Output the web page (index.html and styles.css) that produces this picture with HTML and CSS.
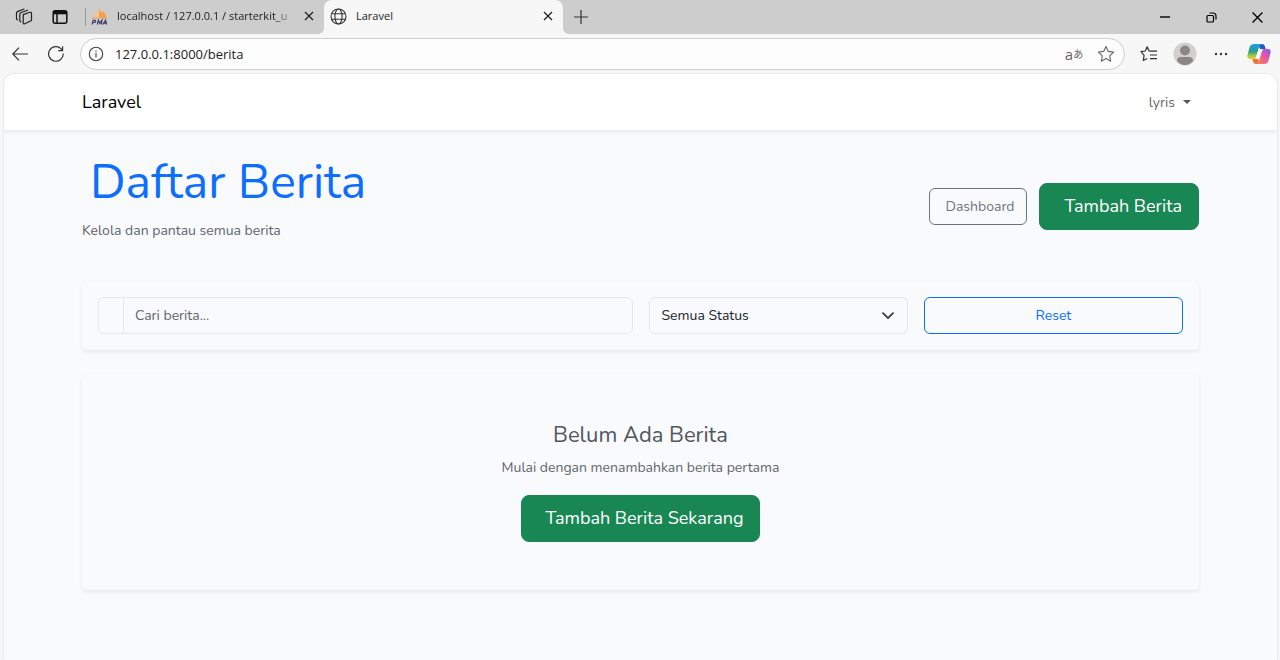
FILE: index.html
```html
<!DOCTYPE html>
<html lang="id">
<head>
<meta charset="utf-8">
<title>Laravel</title>
<link rel="stylesheet" href="styles.css">
</head>
<body>
<header class="browser">
  <div class="tab-strip">
    <button class="strip-btn" aria-label="Workspaces">
      <svg width="18" height="18" viewBox="0 0 18 18" fill="none" stroke="#222" stroke-width="1.2" stroke-linejoin="round" stroke-linecap="round"><path d="M8.200 6.600 15 4.300q1.500-.3 1.500 1.200v6.200q0 1-1 1.300l-5.700 2.800q-1.600.5-1.600-1.100V7.500q0-.7.500-.9z"/><path d="M5.800 13.800q-1-.2-1-1.200V6.200q0-1 1-1.400l6.700-2.600M2.500 11.800q-1-.2-1-1.200V5q0-1 1-1.400L9 1"/></svg>
    </button>
    <button class="strip-btn" aria-label="Tab actions">
      <svg width="16" height="16" viewBox="0 0 16 16" fill="none" stroke="#111" stroke-width="1.5"><rect x="1.200" y="1.700" width="13.600" height="12.600" rx="2"/><path d="M1.500 3.600h13" stroke-width="3.400"/><path d="M5 5v9"/></svg>
    </button>
    <div class="tab">
      <svg width="17" height="17" viewBox="0 0 17 17"><path d="M7 2.500 1.500 9.500H7z" fill="#f9c48a"/><path d="M8 .5v9.200h7.500Q13.500 4 11.500 2.500l-.5 3z" fill="#f7a13e"/><path d="M1 10.300q7-1.500 15 .2" stroke="#e0a060" fill="none"/><path d="M1.200 16.500 2.200 12.300h1.800q1.400 1.200-.2 2.200H2M6.300 16.500l1.100-4.200 1.300 3 2.200-3-.5 4.200M11.800 16.500l2.800-4.200.9 4.200M12.800 15.200h2.400" fill="none" stroke="#3c3c66" stroke-width="1.200"/></svg>
      <span class="tab-title fade">localhost / 127.0.0.1 / starterkit_u</span>
      <button class="close" aria-label="Close tab"><svg width="10" height="10" viewBox="0 0 10 10" stroke="#222" stroke-width="1.300"><path d="m1 1 8 8M9 1 1 9"/></svg></button>
    </div>
    <div class="tab active">
      <svg width="17" height="17" viewBox="0 0 17 17" fill="none" stroke="#333" stroke-width="1.100"><circle cx="8.500" cy="8.500" r="7.500"/><ellipse cx="8.500" cy="8.500" rx="3.600" ry="7.500"/><path d="M1.800 5.800h13.400M1.800 11.200h13.400"/></svg>
      <span class="tab-title">Laravel</span>
      <button class="close" aria-label="Close tab"><svg width="10" height="10" viewBox="0 0 10 10" stroke="#222" stroke-width="1.300"><path d="m1 1 8 8M9 1 1 9"/></svg></button>
    </div>
    <button class="new-tab" aria-label="New tab"><svg width="14" height="14" viewBox="0 0 14 14" stroke="#333" stroke-width="1.200"><path d="M0 7h14M7 0v14"/></svg></button>
    <div class="window-controls">
      <button aria-label="Minimize"><svg width="10" height="10" viewBox="0 0 10 10" stroke="#000" stroke-width="1.400"><path d="M0 5h10"/></svg></button>
      <button aria-label="Restore"><svg width="11" height="11" viewBox="0 0 11 11" fill="none" stroke="#000" stroke-width="1.200"><rect x="1" y="3.500" width="6.500" height="6.500" rx="1"/><path d="M3.500 1H7q3 0 3 3v3.500"/></svg></button>
      <button aria-label="Close"><svg width="11" height="11" viewBox="0 0 10 10" stroke="#000" stroke-width="1.200"><path d="m.5.5 9 9M9.500.5l-9 9"/></svg></button>
    </div>
  </div>
  <div class="toolbar">
    <button aria-label="Back"><svg width="16" height="14" viewBox="0 0 16 14" fill="none" stroke="#333" stroke-width="1.200"><path d="M7 .7.800 7 7 13.300M.800 7H16"/></svg></button>
    <button aria-label="Refresh"><svg width="16" height="16" viewBox="0 0 16 16" fill="none" stroke="#333" stroke-width="1.200"><path d="M15.200 7.500a7.300 7.300 0 1 1-2-4.600l1.300 1.500M14.600.3v4.300h-4.400"/></svg></button>
    <div class="address">
      <svg width="16" height="16" viewBox="0 0 16 16" fill="none" stroke="#444" stroke-width="1.100"><circle cx="8" cy="8" r="6.700"/><path d="M8 7v4.500M8 4.500v1.300"/></svg>
      <input class="url" type="text" aria-label="Address" value="127.0.0.1:8000/berita">
      <button class="translate" aria-label="Translate">a<span>あ</span></button>
      <button aria-label="Add favorite"><svg width="18" height="18" viewBox="0 0 18 18" fill="none" stroke="#666" stroke-width="1.100" stroke-linejoin="round"><path d="m9 1.500 2.300 4.900 5.300.7-3.900 3.700 1 5.400L9 13.600l-4.700 2.600 1-5.400L1.400 7.100l5.300-.7z"/></svg></button>
    </div>
    <button aria-label="Favorites"><svg width="18" height="18" viewBox="0 0 18 18" fill="none" stroke="#333" stroke-width="1.200" stroke-linejoin="round"><path d="M11.200 6 9 5.900 7.200 1.800 5.300 6 1 6.700l3.100 3.600-.8 5.200L7.200 13.500M10 6.200h7M10 10h7M10 13.700h7"/></svg></button>
    <button aria-label="Profile"><svg width="24" height="24" viewBox="0 0 24 24"><circle cx="12" cy="12" r="11.500" fill="#d2d0ce"/><circle cx="12" cy="8.500" r="5" fill="#8a8886"/><path d="M4 19q0-4 4-4h8q4 0 4 4-3.500 4-8 4t-8-4z" fill="#8a8886"/></svg></button>
    <button aria-label="Settings and more"><svg width="14" height="4" viewBox="0 0 14 4" fill="#333"><circle cx="2" cy="2" r="1.200"/><circle cx="7" cy="2" r="1.200"/><circle cx="12" cy="2" r="1.200"/></svg></button>
    <button class="copilot" aria-label="Copilot">
      <svg width="24" height="22" viewBox="0 0 24 22"><defs><linearGradient id="leaf-left" x1="0" y1="0" x2="0" y2="1"><stop offset="0" stop-color="#1a9fe8"/><stop offset=".5" stop-color="#2d9d8c"/><stop offset=".8" stop-color="#a8cc3c"/><stop offset="1" stop-color="#f0d020"/></linearGradient><linearGradient id="leaf-right" x1="1" y1="0" x2="0" y2="1"><stop offset="0" stop-color="#8a55f0"/><stop offset=".5" stop-color="#ec5a9c"/><stop offset="1" stop-color="#ff8c3d"/></linearGradient></defs><path d="M7 1h8q-2 .3-2.600 2L9 14q-.7 2-2.500 2H3q-3.200 0-2.500-4l2-7.500Q3.500 1 7 1z" fill="url(#leaf-left)"/><path d="M17 21H9q2-.3 2.600-2L15 8q.7-2 2.500-2H21q3.200 0 2.500 4l-2 7.500Q20.500 21 17 21z" fill="url(#leaf-right)"/><path d="M12 3.500Q12.700 1 15 1q2.200 0 2.800 2l.9 3h-1.500Q15 6 14 8.500z" fill="#2456cc"/><path d="M12 18.500Q11.300 21 9 21q-2.200 0-2.800-2l-.9-3h1.500Q9 16 10 13.500z" fill="#f2703e"/><path d="M12 5.500 9.300 14q-.5 1.600-1.500 2h2.700l1.500-.8L14.700 8q.5-1.600 1.500-2h-3z" fill="#fff"/></svg>
    </button>
  </div>
</header>
<div class="page">
  <nav class="navbar">
    <div class="container nav-row">
      <a class="brand" href="#">Laravel</a>
      <a class="user" href="#">lyris<span class="caret"></span></a>
    </div>
  </nav>
  <main class="container">
    <div class="page-head">
      <div>
        <h1>Daftar Berita</h1>
        <p>Kelola dan pantau semua berita</p>
      </div>
      <div class="actions">
        <a class="btn btn-gray" href="#">Dashboard</a>
        <a class="btn btn-green" href="#">Tambah Berita</a>
      </div>
    </div>
    <form class="card filters">
      <div class="search">
        <span class="addon"></span>
        <input type="text" placeholder="Cari berita..." aria-label="Cari berita">
      </div>
      <div class="status">
        <select aria-label="Status"><option>Semua Status</option></select>
        <svg width="12" height="8" viewBox="0 0 12 8" fill="none" stroke="#343a40" stroke-width="1.700" stroke-linecap="round" stroke-linejoin="round"><path d="m1 1.200 5 5 5-5"/></svg>
      </div>
      <button class="btn btn-blue" type="reset">Reset</button>
    </form>
    <section class="card empty">
      <h2>Belum Ada Berita</h2>
      <p>Mulai dengan menambahkan berita pertama</p>
      <a class="btn btn-green" href="#">Tambah Berita Sekarang</a>
    </section>
  </main>
</div>
</body>
</html>
```
FILE: styles.css
```css
* { box-sizing: border-box; }
body {
  margin: 0;
  min-height: 100vh;
  display: flex;
  flex-direction: column;
  background: #f7f7f7;
  color: #212529;
  font: 14px/23px Nunito, Lato, sans-serif;
}
h1, h2, p { margin: 0; font-weight: 400; }
a { text-decoration: none; color: inherit; }
button, input, select { font: inherit; color: inherit; }
svg { display: block; flex: none; }

.browser { font: 11px/16px "Segoe UI", "Open Sans", sans-serif; color: #222; }
.browser button {
  display: flex;
  align-items: center;
  justify-content: center;
  flex: none;
  border: 0;
  padding: 0;
  background: none;
}
.tab-strip { display: flex; height: 34px; background: #cdcdcd; }
.strip-btn { width: 36px; }
.tab-strip .strip-btn:first-child { margin-left: 6px; }
.tab {
  display: flex;
  align-items: center;
  gap: 9px;
  width: 239px;
  padding: 0 10px 2px 6px;
}
.tab:not(.active) {
  margin-left: 7px;
  background: linear-gradient(#999, #999) 0 8px / 1px 18px no-repeat;
}
.tab.active { position: relative; background: #f7f7f7; border-radius: 8px 8px 0 0; }
.tab.active::before,
.tab.active::after {
  content: "";
  position: absolute;
  bottom: 0;
  width: 6px;
  height: 6px;
}
.tab.active::before { right: 100%; background: radial-gradient(circle at 0 0, transparent 6px, #f7f7f7 6px); }
.tab.active::after { left: 100%; background: radial-gradient(circle at 100% 0, transparent 6px, #f7f7f7 6px); }
.tab-title { flex: 1; white-space: nowrap; }
.fade { mask-image: linear-gradient(to right, #000 88%, transparent); }
.new-tab { width: 36px; padding-bottom: 2px; }
.window-controls { display: flex; margin-left: auto; }
.window-controls button { width: 46px; }

.toolbar { display: flex; align-items: center; height: 40px; padding-right: 2px; }
.toolbar > button { width: 36px; }
.toolbar > button:first-child { margin-left: 2px; }
.toolbar > .copilot { width: 39px; }
.address {
  display: flex;
  align-items: center;
  flex: 1;
  height: 32px;
  margin: 0 6px;
  padding: 0 2px 0 7px;
  border: 1px solid #cfcfcf;
  border-radius: 16px;
  background: #fdfdfd;
}
.url {
  flex: 1;
  min-width: 0;
  margin-left: 11px;
  padding: 0;
  border: 0;
  background: none;
  font-size: 13px;
}
.address button { width: 32px; }
.address .translate { font: 15px/16px "Open Sans", "Noto Sans CJK JP", sans-serif; color: #666; }
.translate span { font-size: 10px; }

.page {
  flex: 1;
  margin: 0 3px 0 4px;
  border-radius: 10px 10px 0 0;
  background: #f8fafc;
  box-shadow: 0 0 2px rgba(0, 0, 0, .2);
  overflow: hidden;
}
.container { max-width: 1141px; margin: 0 auto; padding: 0 12px; }
.navbar { background: #fff; box-shadow: 0 2px 4px rgba(0, 0, 0, .075); }
.nav-row { display: flex; align-items: center; justify-content: space-between; height: 56px; }
.brand { font-size: 18px; color: #000; }
.user { display: flex; align-items: center; gap: 8px; padding-right: 8px; color: #666; }
.caret { border: 4px solid transparent; border-top-color: #555; border-bottom: 0; }

.page-head { display: flex; align-items: center; justify-content: space-between; padding: 24px 0 23px; }
h1 { margin-bottom: 8px; padding-left: 8px; font-size: 48px; line-height: 57px; color: #0d6efd; }
.page-head p { margin-bottom: 16px; }
.page-head p, .empty p { color: #5f666d; }
.actions { display: flex; align-items: center; gap: 12px; }
.btn {
  display: inline-block;
  border: 1px solid;
  border-radius: 6px;
  background: none;
  padding: 6px 12px;
  text-align: center;
}
.btn-gray { padding-left: 16px; color: #6c757d; }
.btn-green {
  padding: 8px 16px 8px 24px;
  border-color: #198754;
  border-radius: 8px;
  background: #198754;
  color: #fff;
  font-size: 18px;
  line-height: 29px;
}
.btn-blue { color: #0d6efd; }

.card { border-radius: 6px; box-shadow: 0 2px 4px rgba(0, 0, 0, .075); }
.filters { display: grid; grid-template-columns: repeat(4, 1fr); gap: 16px; padding: 16px; margin-bottom: 24px; }
.search {
  grid-column: span 2;
  display: flex;
  border: 1px solid #e5e7ea;
  border-radius: 6px;
}
.addon { width: 25px; border-right: 1px solid #e5e7ea; }
.search input { flex: 1; min-width: 0; border: 0; padding: 0 11px; background: none; }
.search input::placeholder { color: #5f666d; opacity: 1; }
.status { display: grid; align-items: center; }
.status > * { grid-area: 1 / 1; }
.status svg { justify-self: end; margin-right: 14px; pointer-events: none; }
.status select {
  appearance: none;
  width: 100%;
  height: 37px;
  padding: 0 12px;
  border: 1px solid #e5e7ea;
  border-radius: 6px;
  background: none;
}
.empty { padding: 48px; text-align: center; }
.empty h2 { margin-bottom: 8px; font-size: 22px; line-height: 26px; color: #50565c; }
.empty p { margin-bottom: 16px; }
```
